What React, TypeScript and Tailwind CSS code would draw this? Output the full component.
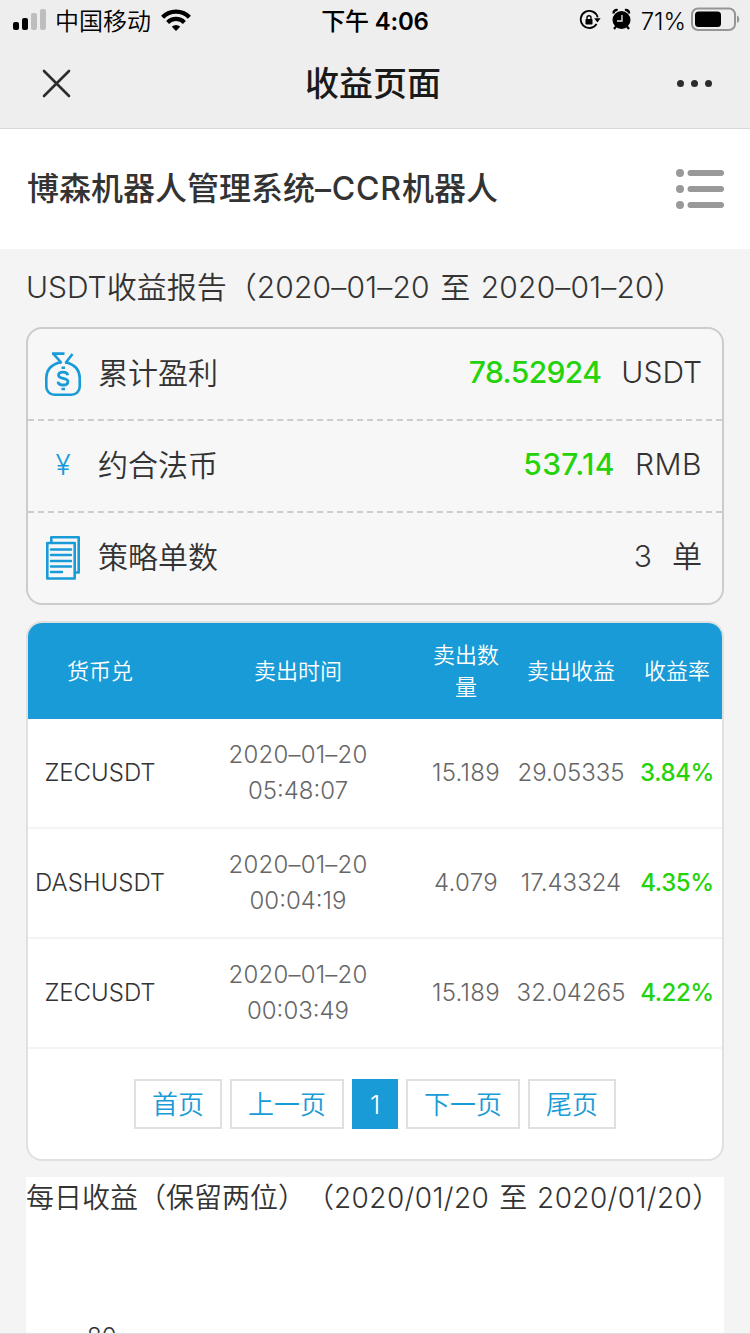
import { ReactNode } from "react";

interface Order {
    pair: string;
    date: string;
    time: string;
    amount: string;
    profit: string;
    rate: string;
}

const orders: Order[] = [
    { pair: "ZECUSDT", date: "2020–01–20", time: "05:48:07", amount: "15.189", profit: "29.05335", rate: "3.84%" },
    { pair: "DASHUSDT", date: "2020–01–20", time: "00:04:19", amount: "4.079", profit: "17.43324", rate: "4.35%" },
    { pair: "ZECUSDT", date: "2020–01–20", time: "00:03:49", amount: "15.189", profit: "32.04265", rate: "4.22%" },
];

const columns = "grid grid-cols-[144px_252px_84px_126px_86px] items-center text-center";

function StatusBar() {
    return (
        <div className="grid grid-cols-[1fr_auto_1fr] items-center h-10 pl-3 pr-2.5 text-2xl text-black">
            <div className="flex items-center">
                <svg className="w-9 h-6 -mt-0.5" viewBox="0 0 36 24" fill="#000">
                    <rect x="1" y="15" width="6" height="8" rx="2" />
                    <rect x="10" y="11" width="6" height="12" rx="2" />
                    <rect x="19" y="6" width="6" height="17" rx="2" fill="#bebebe" />
                    <rect x="28" y="2" width="6" height="21" rx="2" fill="#bebebe" />
                </svg>
                <span className="ml-[7px] pt-[3px] leading-9">中国移动</span>
                <svg className="ml-2.5 w-[30px] h-[22px]" viewBox="0 0 30 22">
                    <path d="M1.6 8.2a19 19 0 0 1 26.8 0" fill="none" stroke="#000" strokeWidth="4.4" />
                    <path d="M6.6 13.4a12 12 0 0 1 16.8 0" fill="none" stroke="#000" strokeWidth="4.2" />
                    <path d="M15 22l-4.2-4.2a6 6 0 0 1 8.4 0z" fill="#000" />
                </svg>
            </div>
            <div className="pt-[3px] pr-0.5 font-semibold leading-9 tracking-[-0.2px]">
                <span className="font-medium">下午</span> 4:06
            </div>
            <div className="flex items-center justify-end">
                <svg className="w-[22px] h-[22px]" viewBox="0 0 22 22">
                    <path d="M18.6 11a8.6 8.6 0 1 1-2.2-6.4" transform="rotate(28 10 11)" fill="none" stroke="#000" strokeWidth="1.8" />
                    <path d="M15.2 9.2h6.4L18.4 13.4z" fill="#000" />
                    <rect x="6.5" y="10" width="7" height="5.6" rx="0.8" fill="#000" />
                    <path d="M8 10.5V8.8a2 2 0 0 1 4 0V10.5" fill="none" stroke="#000" strokeWidth="1.4" />
                </svg>
                <svg className="ml-2.5 -mt-0.5 w-5 h-[22px]" viewBox="0 0 20 22">
                    <circle cx="10.5" cy="12" r="9" fill="#000" />
                    <path d="M2.6 5.6a3 3 0 0 1 4-3.4M18 5.6a3 3 0 0 0-4-3.4" fill="none" stroke="#000" strokeWidth="2.4" />
                    <path d="M5 18.5l-2 2.5M16 18.5l2 2.5" stroke="#000" strokeWidth="2.2" />
                    <path d="M11 7v6H6" fill="none" stroke="#eee" strokeWidth="1.3" />
                </svg>
                <span className="ml-2.5 pt-[3px] leading-9">71%</span>
                <svg className="ml-[5px] w-[49px] h-6 -mt-0.5" viewBox="0 0 49 24">
                    <rect x="1" y="1.5" width="43" height="21.5" rx="6" fill="none" stroke="#959595" strokeWidth="2" />
                    <rect x="4" y="4.5" width="26" height="15.5" rx="3.5" fill="#000" />
                    <path d="M46 8.5c3 1 3 6.5 0 7.5z" fill="#959595" />
                </svg>
            </div>
        </div>
    );
}

function NavBar() {
    return (
        <div className="flex items-center justify-between h-[87px] pl-[42px] pr-[38px]">
            <svg className="w-[29px] h-[29px]" viewBox="0 0 29 29" stroke="#2c2c2c" strokeWidth="2.6" strokeLinecap="round">
                <path d="M2 2L27 27M27 2L2 27" />
            </svg>
            <h1 className="pt-px pr-0.5 text-[34px] leading-[48px] font-medium text-[#1a1a1a]">收益页面</h1>
            <div className="flex gap-[7px]">
                <span className="w-[7px] h-[7px] rounded-full bg-[#2c2c2c]" />
                <span className="w-[7px] h-[7px] rounded-full bg-[#2c2c2c]" />
                <span className="w-[7px] h-[7px] rounded-full bg-[#2c2c2c]" />
            </div>
        </div>
    );
}

function MenuIcon() {
    return (
        <svg className="w-12 h-10" viewBox="0 0 48 40" fill="#999">
            {[4, 20, 36].map((y) => (
                <g key={y}>
                    <circle cx="4" cy={y} r="4" />
                    <rect x="11.5" y={y - 3} width="36.5" height="6" rx="3" />
                </g>
            ))}
        </svg>
    );
}

function MoneyBagIcon() {
    return (
        <svg className="w-9 h-[46px]" viewBox="0 0 36 46" fill="none" stroke="#189bd7" strokeWidth="2.6">
            <path d="M14 11.5C6 14 1.3 19.5 1.3 27v8.7a8 8 0 0 0 8 8h17.4a8 8 0 0 0 8-8V27C34.7 19.5 30 14 22 11.5" />
            <path d="M7 2.6H19.5M8.5 2.8L16.5 12M27.5 3L20.5 12M13.5 11.7h3M20 11.7h3" />
            <path d="M22.8 24.2c-.4-2-2.1-3-4.8-3-2.8 0-4.500 1.200-4.500 3.100 0 4.500 9.400 1.700 9.400 6.400 0 2.100-1.900 3.300-4.800 3.300-3 0-4.900-1.200-5.100-3.400" strokeWidth="2.8" />
            <path d="M16.5 16.8h3.5M16.5 38h3.5" />
        </svg>
    );
}

function DocsIcon() {
    return (
        <svg className="w-9 h-[46px]" viewBox="0 0 36 46" fill="none" stroke="#189bd7" strokeWidth="2.6" strokeLinejoin="round">
            <path d="M6.3 7V2.3H33.7V37.5H30.5" />
            <rect x="2.3" y="8" width="27.4" height="35.5" />
            <path d="M6 14.5H26M6 20H26M6 26H26M6 31.5H26M6 37H17" strokeWidth="2.4" strokeLinecap="round" />
        </svg>
    );
}

function SummaryRow({ icon, label, children }: { icon: ReactNode; label: string; children: ReactNode }) {
    return (
        <div className="flex items-center h-[92px] px-4 text-[30px] leading-[44px] border-b-2 border-dashed border-[#ccc] last:border-b-0 last:h-[90px]">
            <div className="w-[38px] flex justify-center">{icon}</div>
            <span className="ml-4 mr-auto pb-0.5">{label}</span>
            <div className="flex items-center gap-5 pr-1 pb-[5px]">{children}</div>
        </div>
    );
}

function PageButton({ label, active }: { label: string; active?: boolean }) {
    if (active) {
        return <button className="w-[46px] h-[50px] bg-[#189bd7] text-white text-[26px]">{label}</button>;
    }
    return <button className="h-[50px] px-4 border-2 border-[#e0e0e0] text-[#189bd7] text-[26px]">{label}</button>;
}

export default function App() {
    return (
        <div className="w-[750px] h-[1334px] overflow-hidden flex flex-col bg-[#f4f4f4] border-b border-[#ddd] text-[#333] font-[350] font-[Inter,'Noto_Sans_CJK_SC',sans-serif] [text-spacing-trim:space-all]">
            <header className="shrink-0 h-[129px] bg-[#eee] border-b border-[#d8d8d8]">
                <StatusBar />
                <NavBar />
            </header>

            <div className="shrink-0 flex items-center justify-between h-[120px] pl-[27px] pr-[26px] bg-white">
                <h2 className="text-[32px] font-medium">
                    博森机器人管理系统<span className="tracking-[0.8px]">–CCR</span>机器人
                </h2>
                <MenuIcon />
            </div>

            <main className="px-[26px]">
                <h3 className="h-[78px] leading-[76px] text-[30px] whitespace-nowrap [word-spacing:2px]">
                    USDT收益报告（<span className="tracking-[0.2px]">2020–01–20</span> 至 <span className="tracking-[0.2px]">2020–01–20</span>）
                </h3>

                {/* Summary */}
                <section className="border-2 border-[#ccc] rounded-2xl bg-[#f7f7f7]">
                    <SummaryRow icon={<MoneyBagIcon />} label="累计盈利">
                        <span className="font-medium text-[#25d30a] tracking-[-0.6px]">78.52924</span>
                        <span>USDT</span>
                    </SummaryRow>
                    <SummaryRow icon={<span className="pb-0.5 text-[28px] text-[#189bd7]">¥</span>} label="约合法币">
                        <span className="font-medium text-[#25d30a] tracking-[0.4px]">537.14</span>
                        <span className="tracking-[0.5px]">RMB</span>
                    </SummaryRow>
                    <SummaryRow icon={<DocsIcon />} label="策略单数">
                        <span>3</span>
                        <span>单</span>
                    </SummaryRow>
                </section>

                {/* Orders */}
                <section className="mt-4 border-2 border-[#e0e0e0] rounded-2xl bg-white overflow-hidden">
                    <div className={`${columns} h-24 bg-[#189bd7] text-white text-[22px] leading-8`}>
                        <span>货币兑</span>
                        <span>卖出时间</span>
                        <span className="px-2">卖出数量</span>
                        <span>卖出收益</span>
                        <span>收益率</span>
                    </div>
                    {orders.map((order, i) => (
                        <div key={i} className={`${columns} h-[110px] border-b-2 border-[#f4f4f4] text-2xl leading-9 text-[#666]`}>
                            <span className="text-[#333]">{order.pair}</span>
                            <span>
                                <span className="tracking-[0.2px]">{order.date}</span>
                                <br />
                                {order.time}
                            </span>
                            <span className="tracking-[0.3px]">{order.amount}</span>
                            <span>{order.profit}</span>
                            <span className="font-medium text-[#25d30a] tracking-[-0.4px]">{order.rate}</span>
                        </div>
                    ))}
                    <div className="flex justify-center gap-2 py-[30px]">
                        <PageButton label="首页" />
                        <PageButton label="上一页" />
                        <PageButton label="1" active />
                        <PageButton label="下一页" />
                        <PageButton label="尾页" />
                    </div>
                </section>

                {/* Daily profit chart */}
                <section className="mt-4 h-[157px] bg-white overflow-hidden">
                    <h3 className="pt-px text-[28px] leading-10 whitespace-nowrap [word-spacing:2px]">
                        每日收益（保留两位）（<span className="tracking-[0.4px]">2020/01/20</span> 至 <span className="tracking-[0.4px]">2020/01/20</span>）
                    </h3>
                    <div className="mt-[105px] ml-[61px] text-2xl leading-7">80</div>
                </section>
            </main>
        </div>
    );
}
